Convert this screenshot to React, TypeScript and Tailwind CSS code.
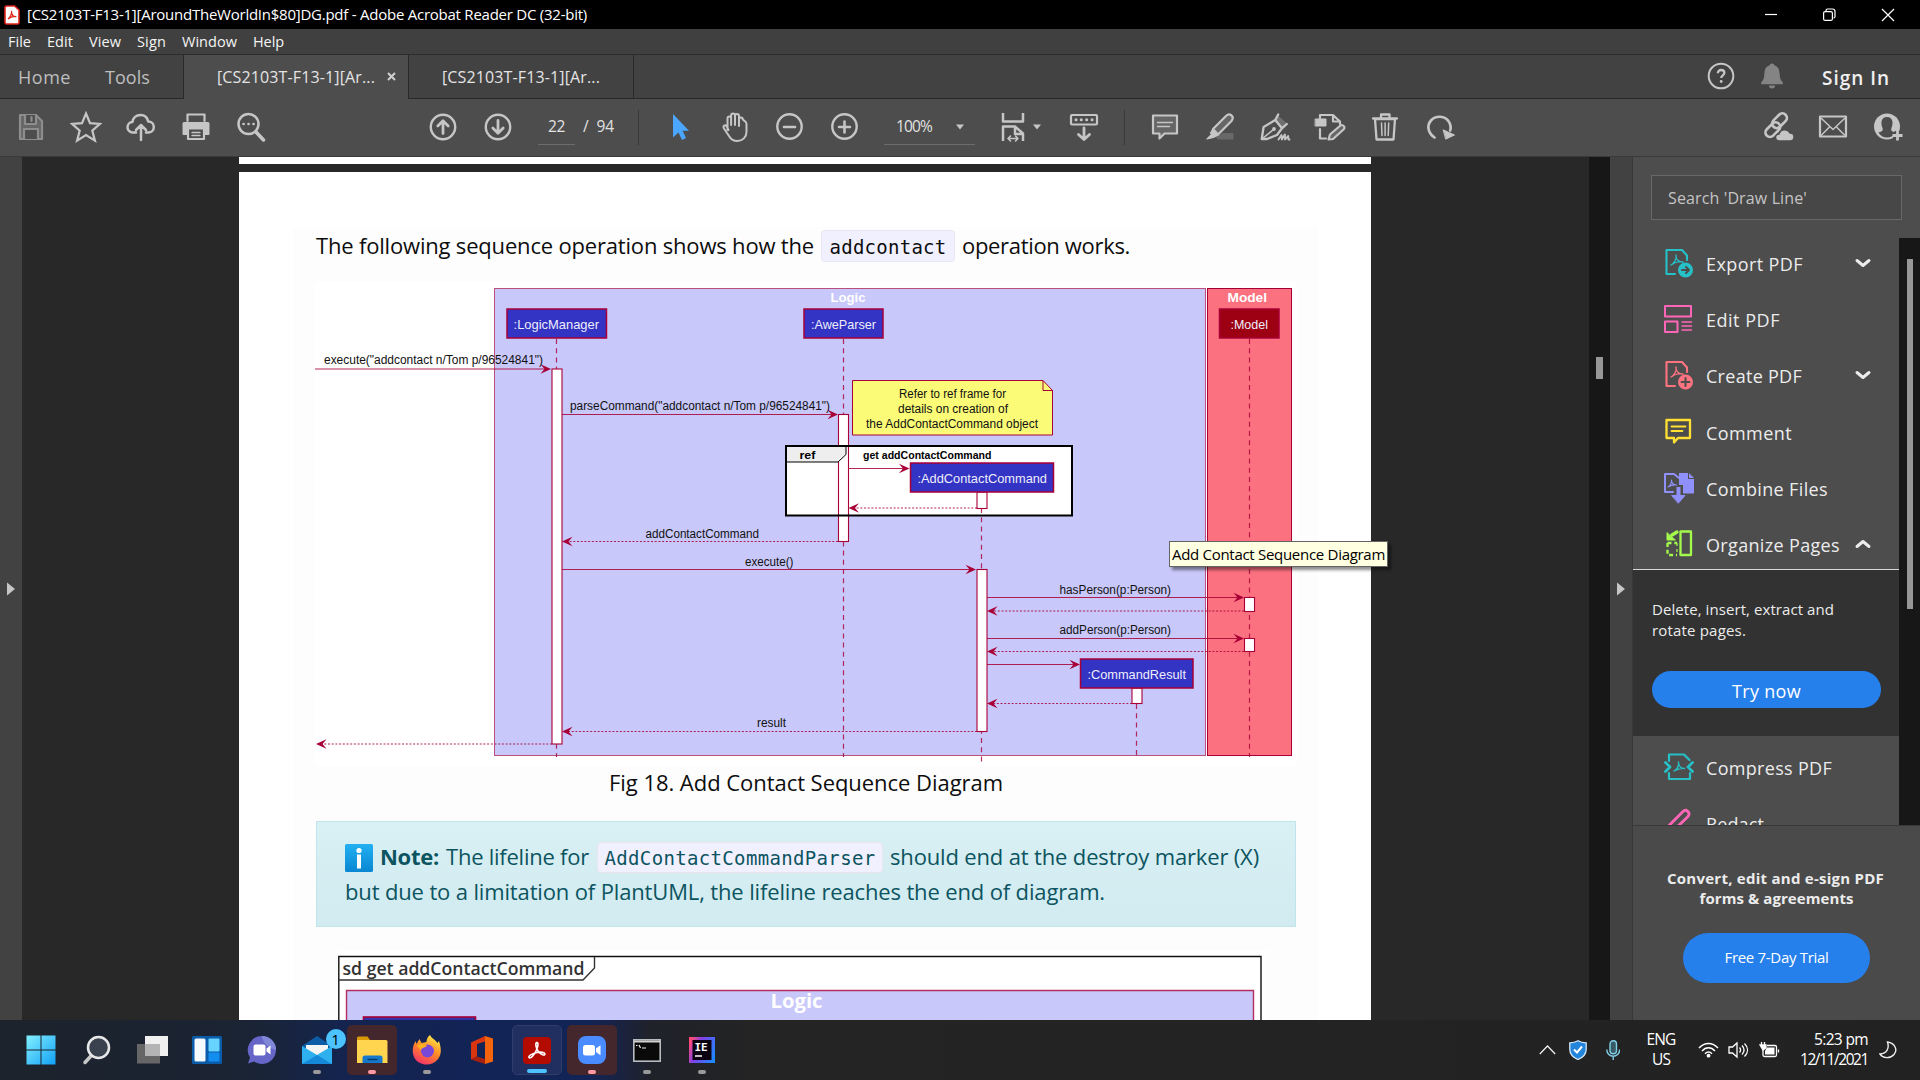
import React, { useLayoutEffect, useRef, useState } from "react";

/* Text set to a fixed measure by spreading the difference over its letters. */
function Fit({ w, className = "", children }: { w: number; className?: string; children: string }) {
  const ref = useRef<HTMLSpanElement>(null);
  const [ls, setLs] = useState(0);
  useLayoutEffect(() => {
    const el = ref.current;
    if (el) setLs((w - el.getBoundingClientRect().width) / children.length);
  }, []);
  return (
    <span ref={ref} className={`inline-block shrink-0 whitespace-pre ${className}`} style={{ letterSpacing: ls }}>
      {children}
    </span>
  );
}

const G = "#c6c6c6";

function Icon({ s = 32, children, color = G, sw = 2.2 }: { s?: number; children: React.ReactNode; color?: string; sw?: number }) {
  return (
    <svg width={s} height={s} viewBox={`0 0 ${s} ${s}`} fill="none" stroke={color} strokeWidth={sw} strokeLinejoin="round" strokeLinecap="round" className="shrink-0">
      {children}
    </svg>
  );
}

function Cell({ children }: { children: React.ReactNode }) {
  return <div className="flex w-[55px] shrink-0 items-center justify-center">{children}</div>;
}

function Caret() {
  return (
    <svg width="8" height="6" viewBox="0 0 8 6" className="shrink-0">
      <path d="M0 .5h8L4 5.5z" fill={G} />
    </svg>
  );
}

function TitleBar() {
  return (
    <div className="flex h-[29px] shrink-0 items-center bg-black text-white">
      <svg width="16" height="20" viewBox="0 0 16 20" className="ml-1">
        <path d="M2.500 1h8L15 5v12.500a1.500 1.500 0 0 1-1.500 1.500h-11A1.500 1.500 0 0 1 1 17.500V2.500A1.500 1.500 0 0 1 2.500 1z" fill="#fff" stroke="#e0251b" strokeWidth="1.600" />
        <path d="M4 14c2-1 4-5 3.600-8-.8 4 2.400 6 4.600 5.600-3-.8-6 .6-8.200 2.400z" fill="none" stroke="#e0251b" strokeWidth="1.300" />
      </svg>
      <Fit w={560} className="ml-[7px] text-[15px] leading-none">[CS2103T-F13-1][AroundTheWorldIn$80]DG.pdf - Adobe Acrobat Reader DC (32-bit)</Fit>
      <svg width="150" height="28" viewBox="0 0 150 28" className="ml-auto mr-[22px]" fill="none" stroke="#fff" strokeWidth="1.200">
        <path d="M17 13.500h12" />
        <rect x="75.600" y="10.600" width="8.800" height="8.800" rx="1.500" />
        <path d="M78 10V9.500a1.500 1.500 0 0 1 1.500-1.500h5a2.500 2.500 0 0 1 2.500 2.500v5a1.500 1.500 0 0 1-1.500 1.500" />
        <path d="M134 8l12 12M146 8l-12 12" />
      </svg>
    </div>
  );
}

function MenuBar() {
  const items: [string, number, string][] = [
    ["File", 23, "ml-[8px]"],
    ["Edit", 26, "ml-[16px]"],
    ["View", 32, "ml-[16px]"],
    ["Sign", 29, "ml-[16px]"],
    ["Window", 55, "ml-[16px]"],
    ["Help", 31, "ml-[16px]"],
  ];
  return (
    <div className="flex h-[26px] shrink-0 items-center border-b border-[#2b2b2b] bg-[#404040] pt-px text-[14.5px] leading-none text-[#f4f4f4]">
      {items.map(([t, w, m]) => (
        <span key={t} className={m}>
          <Fit w={w}>{t}</Fit>
        </span>
      ))}
    </div>
  );
}

function TabBar() {
  return (
    <div className="flex h-[44px] shrink-0 bg-[#424242] leading-none">
      <div className="flex w-[184px] items-center border-b border-r border-[#292929] text-[18px] text-[#bebebe]">
        <Fit w={53} className="ml-[18px]">Home</Fit>
        <Fit w={45} className="ml-[34px]">Tools</Fit>
      </div>
      <div className="flex w-[224px] items-center bg-[#4d4d4d] text-[16px] text-[#e4e4e4]">
        <Fit w={158} className="ml-[33px]">[CS2103T-F13-1][Ar...</Fit>
        <svg width="9" height="9" viewBox="0 0 9 9" className="-mt-[2px] ml-[12px]" stroke="#d0d0d0" strokeWidth="2">
          <path d="M1 1l7 7M8 1L1 8" />
        </svg>
      </div>
      <div className="flex w-[226px] items-center border-x border-b border-[#292929] text-[16px] text-[#e4e4e4]">
        <Fit w={158} className="ml-[33px] mt-px">[CS2103T-F13-1][Ar...</Fit>
      </div>
      <div className="flex flex-1 items-center justify-end border-b border-[#292929]">
        <svg width="28" height="28" viewBox="0 0 28 28" className="-mt-px" fill="none" stroke={G} strokeWidth="2">
          <circle cx="14" cy="14" r="12.300" />
          <path d="M10.800 11.200c0-4.400 6.600-4 6.600-.4 0 2.600-3.200 2.600-3.200 5.200" strokeWidth="2.300" />
          <circle cx="14.200" cy="19.500" r="1.400" fill={G} stroke="none" />
        </svg>
        <svg width="24" height="28" viewBox="0 0 24 28" className="-mt-px ml-[25px]" fill="#848484">
          <path d="M12 1.500c1.400 0 2 .8 2.200 1.800 4 1 5.200 4.400 5.400 8.700.2 4 1 6.600 3.200 8.200v2H1.200v-2c2.200-1.600 3-4.200 3.200-8.200.2-4.300 1.400-7.700 5.400-8.700.2-1 .8-1.800 2.200-1.800zM9 23.500h6a3 3 0 0 1-6 0z" />
        </svg>
        <Fit w={68} className="ml-[38px] mr-[30px] mt-[3px] text-[19px] font-semibold text-[#f0f0f0]">Sign In</Fit>
      </div>
    </div>
  );
}

function Toolbar() {
  return (
    <div className="flex h-[58px] shrink-0 items-center border-b border-[#3a3a3a] bg-[#4d4d4d] pb-px">
      <div className="ml-[3px] flex">
        <Cell>
          <Icon color="#8d8d8d">
            <path d="M5 4h16l6 6v18H5z" fill="#666" />
            <path d="M10 4v9h11V4M16.500 6v4M9 28V18h14v10" fill="#4d4d4d" />
          </Icon>
        </Cell>
        <Cell>
          <Icon>
            <path d="M16 2.500l4 9.700 10 .7-7.700 6.700 2.600 10L16 24l-8.900 5.600 2.600-10L2 12.900l10-.7z" strokeLinejoin="miter" />
          </Icon>
        </Cell>
        <Cell>
          <Icon sw={2.5}>
            <path d="M11 21.500H8a5.200 5.200 0 0 1-.6-10.400C8 6.800 11.300 4 15.500 4c4 0 7 2.600 7.700 6.600 3.400 0 5.600 2.300 5.600 5.300 0 3.200-2.300 5.600-5.600 5.600H21M16 29V14.500M11 19l5-5 5 5" />
          </Icon>
        </Cell>
        <Cell>
          <Icon>
            <path d="M7.500 10V3.500h17V10" />
            <path d="M4 11h24a1.500 1.500 0 0 1 1.500 1.500V23a1 1 0 0 1-1 1H3.500a1 1 0 0 1-1-1V12.500A1.500 1.500 0 0 1 4 11z" fill={G} stroke="none" />
            <path d="M8 17.500h16V28H8z" fill="#4d4d4d" />
            <path d="M12 21.500h8M12 24.500h8" strokeWidth="1.300" />
          </Icon>
        </Cell>
        <Cell>
          <Icon sw={2.5}>
            <circle cx="13.500" cy="13" r="10" />
            <path d="M21 21l7.500 8" strokeWidth="3.500" />
            <path d="M8.500 13h.1M13.500 13h.1M18.500 13h.1" strokeWidth="2.600" />
          </Icon>
        </Cell>
      </div>
      <div className="ml-[137px] flex">
        <Cell>
          <Icon sw={2.4}>
            <circle cx="16" cy="16" r="12.200" />
            <path d="M16 22.500V10M10.800 15L16 9.800l5.200 5.200" strokeWidth="2.800" />
          </Icon>
        </Cell>
        <Cell>
          <Icon sw={2.4}>
            <circle cx="16" cy="16" r="12.200" />
            <path d="M16 9.500V22M10.800 17L16 22.200l5.200-5.200" strokeWidth="2.800" />
          </Icon>
        </Cell>
      </div>
      <div className="ml-[13px] flex h-[35px] w-[37px] items-center justify-center border-b border-[#6c6c6c] text-[15.500px] leading-none text-[#e2e2e2]">
        <Fit w={17}>22</Fit>
      </div>
      <Fit w={31} className="ml-[8px] text-[15.500px] leading-none text-[#e2e2e2]">/  94</Fit>
      <div className="ml-[24px] h-[35px] w-px bg-[#383838]" />
      <div className="ml-[13px] flex">
        <Cell>
          <svg width="20" height="30" viewBox="0 0 20 30">
            <path d="M3 2v23.500l5.500-5 3.500 7.500 4-2-3.400-7.200H19z" fill="#4ba6ff" />
          </svg>
        </Cell>
        <Cell>
          <Icon sw={2}>
            <path d="M8.500 19V7.500c0-2.600 3.600-2.600 3.600 0V14M12.100 14V4.500c0-2.800 3.900-2.800 3.900 0V14M16 14V5c0-2.800 4-2.800 4 0v10M20 15V8.500c0-2.600 3.800-2.600 3.800 0l3 2.500c.8 1 .7 2 .7 3v7c0 5-4 9-9 9-4 0-6.500-1.500-8.500-5l-5-7.500c-1.500-3 1-4 2.500-2.500l2 4" />
          </Icon>
        </Cell>
        <Cell>
          <Icon sw={2.4}>
            <circle cx="15.500" cy="15.500" r="12.200" />
            <path d="M10 16h11" strokeWidth="2.600" />
          </Icon>
        </Cell>
        <Cell>
          <Icon sw={2.4}>
            <circle cx="15.500" cy="15.500" r="12.200" />
            <path d="M10 16h11M15.500 10.500v11" strokeWidth="2.600" />
          </Icon>
        </Cell>
      </div>
      <div className="ml-[12px] flex h-[35px] w-[91px] items-center border-b border-[#6c6c6c] text-[15.500px] leading-none text-[#e2e2e2]">
        <Fit w={36} className="ml-[12px] mt-px">100%</Fit>
        <span className="ml-[24px]">
          <Caret />
        </span>
      </div>
      <div className="ml-[22px] flex items-center">
        <Icon sw={2.5}>
          <path d="M6 2v8.500h20V2M6 30V15.500h12l8 7V30M18 16v7h8" strokeLinecap="butt" />
          <path d="M11 27.500h10M13.500 25L11 27.500l2.500 2.500M18.500 25l2.500 2.500-2.500 2.500" strokeWidth="1.600" />
        </Icon>
        <span className="ml-[4px]">
          <Caret />
        </span>
      </div>
      <div className="ml-[27px] flex items-center">
        <Icon>
          <rect x="3" y="4" width="26" height="9.500" rx="1" />
          <path d="M8 8.800h.1M13.200 8.800h.1M18.600 8.800h.1M24 8.800h.1" strokeWidth="3" />
          <path d="M16 17v11M10.500 23.500l5.500 5 5.500-5" strokeWidth="2.800" />
        </Icon>
      </div>
      <div className="ml-[24px] h-[35px] w-px bg-[#383838]" />
      <div className="ml-[12px] flex">
        <Cell>
          <Icon>
            <path d="M4 4.500h24v18H15.500l-5 5v-5H4z" fill="#666" />
            <path d="M8.500 11.500h15M8.500 15.500h12" strokeWidth="1.400" />
          </Icon>
        </Cell>
        <Cell>
          <Icon>
            <path d="M14 28.500l-3-3L19 22h10.500v6.500z" fill="#686868" stroke="none" />
            <path d="M9 18L22.500 4.500c3-3 8.500 1 5 5.500L14 23.500z" fill="#666" />
            <path d="M8.500 18.500l5.500 5.500-3.500 2-4-4zM3 28l4-4 2.500 2.500z" fill={G} strokeWidth="1.200" />
          </Icon>
        </Cell>
        <Cell>
          <Icon>
            <path d="M18.500 4l-2 5.500 6.500 7.500 5.500-4z" fill="#707070" stroke="none" />
            <path d="M2.700 28l1.900-12L16.300 9l6.700 8.300-5 6.700-10 4zM19.200 3.500L16.300 9M23 17.300l4.800-4.300" strokeWidth="2.300" />
            <path d="M3.500 27.500l11-9" strokeWidth="1.600" />
            <path d="M19.500 28.500l3-4.500.4 4.500 3-5 .2 5 3-3.500.4 3.500h1" strokeWidth="1.900" />
            <circle cx="15" cy="18" r="1.900" fill={G} stroke="none" />
          </Icon>
        </Cell>
        <Cell>
          <Icon>
            <path d="M6 8V4h13l7 6.500V13M19 4v6.500h7" />
            <rect x="1.500" y="8" width="10.500" height="7" fill={G} strokeWidth="1" />
            <path d="M6 18v9.500h6" />
            <path d="M14.500 28.500l1.500-5L27 14c3 0 4 2 3 4L19 28z" fill="#666" />
          </Icon>
        </Cell>
        <Cell>
          <Icon sw={2.3}>
            <path d="M6 8h20l-1.500 20.500h-17zM4 7.500h24M12 7V3.500h8.500V7" />
            <path d="M12.500 12l.5 12.500M16.100 12v12.500M19.700 12l-.5 12.500" strokeWidth="1.500" />
          </Icon>
        </Cell>
        <Cell>
          <Icon sw={2.7}>
            <path d="M10.500 26.500C4 22 2.500 14.500 7 9.500c4.500-5 12.500-5 17 0 2.500 3 3.200 6.500 2.200 10" />
            <path d="M19.500 19l11 5-8.500 4z" fill={G} strokeWidth="1" />
          </Icon>
        </Cell>
      </div>
      <div className="ml-auto mr-[5px] flex">
        <Cell>
          <Icon sw={2.7}>
            <g transform="translate(14 14) rotate(-45)">
              <rect x="-3" y="-5" width="17" height="9" rx="4.500" />
              <rect x="-14" y="-3.500" width="17" height="9" rx="4.500" />
            </g>
            <path d="M17 30a3.500 3.500 0 0 1 0-7 6 6 0 0 1 11-1 4 4 0 0 1 0 8z" fill={G} stroke="#4d4d4d" strokeWidth="1.500" />
          </Icon>
        </Cell>
        <Cell>
          <Icon>
            <rect x="3" y="5.500" width="26" height="20" />
            <path d="M4.500 7.500L16 18.500 27.500 7.500M4.500 24l8.500-8.500M27.500 24L19 15.500" strokeWidth="1.500" />
          </Icon>
        </Cell>
        <Cell>
          <Icon>
            <circle cx="15" cy="15.500" r="13" fill={G} stroke="none" />
            <path d="M15 6c6 0 6.500 6 4.500 11-.8 2.500 0 3.500 4 4.500-1.500 3-5 5-8.500 5s-7-2-8.500-5c4-1 4.800-2 4-4.500C8.500 12 9 6 15 6z" fill="#4d4d4d" stroke="none" />
            <path d="M21 24.500h9M25.500 20v9" stroke="#4d4d4d" strokeWidth="6" strokeLinecap="butt" />
            <path d="M20.500 24.500h10M25.500 19.500v10" strokeWidth="2.800" strokeLinecap="butt" />
          </Icon>
        </Cell>
      </div>
    </div>
  );
}

/* ---------- Sequence diagram ---------- */

const M = "#a80036";

function Arrow({ from, to, y, dashed }: { from: number; to: number; y: number; dashed?: boolean }) {
  const d = to > from ? -1 : 1;
  return (
    <g>
      <path d={`M${from} ${y}H${to + d * 4}`} stroke={M} strokeWidth="1.1" strokeDasharray={dashed ? "2 1.7" : undefined} opacity="0.85" />
      <path d={`M${to} ${y}l${d * 10.5} -4.700l${d * -4} 4.700l${d * 4} 4.700z`} fill={M} />
    </g>
  );
}

function Life({ x, y1, y2 }: { x: number; y1: number; y2: number }) {
  return <path d={`M${x} ${y1}V${y2}`} stroke={M} strokeWidth="1.200" strokeDasharray="5 4.200" opacity="0.8" />;
}

function Bar({ x, y1, y2 }: { x: number; y1: number; y2: number }) {
  return <rect x={x} y={y1} width="10" height={y2 - y1} fill="#fff" stroke={M} strokeWidth="1.100" />;
}

function T({ x1, x2, y, size = 12.5, fill = "#111", bold, children }: { x1: number; x2: number; y: number; size?: number; fill?: string; bold?: boolean; children: string }) {
  return (
    <text x={x1} y={y} textLength={x2 - x1} lengthAdjust="spacingAndGlyphs" fontSize={size} fill={fill} fontWeight={bold ? 700 : 400} fontFamily="'Liberation Sans', sans-serif">
      {children}
    </text>
  );
}

function Box({ x1, x2, y, fill = "#3333c4", t1, t2, children }: { x1: number; x2: number; y: number; fill?: string; t1: number; t2: number; children: string }) {
  return (
    <g>
      <rect x={x1} y={y} width={x2 - x1} height="29" fill={fill} stroke={M} strokeWidth="1.500" />
      <T x1={t1} x2={t2} y={y + 20} size={13.5} fill="#eeeefa">{children}</T>
    </g>
  );
}

function SequenceDiagram() {
  return (
    <svg width="982" height="484" viewBox="315 282 982 484" fill="none" className="block bg-white">
      <rect x="494.500" y="288.500" width="711" height="467" fill="#c8c8fa" stroke={M} strokeOpacity="0.65" />
      <rect x="1207.500" y="288.500" width="84" height="467" fill="#fb7180" stroke={M} />
      <T x1={830.5} x2={865.5} y={302} size={13.5} bold fill="#fff">Logic</T>
      <T x1={1227.5} x2={1267} y={302} size={13.5} bold fill="#fff">Model</T>
      <Life x={556.5} y1={339} y2={757} />
      <Life x={843.5} y1={339} y2={757} />
      <Life x={1249.5} y1={339} y2={757} />
      <Life x={1136.5} y1={704} y2={757} />
      <rect x="786" y="446.500" width="286" height="69.500" fill="#fff" />
      <Life x={981.5} y1={508} y2={762} />
      <Bar x={552} y1={369} y2={744} />
      <Bar x={838.5} y1={414.5} y2={541.5} />
      <path d="M786 446.500h60v8l-8 7.500h-52z" fill="#eee" stroke="#000" strokeWidth="1" />
      <rect x="786" y="446" width="286" height="69.500" stroke="#000" strokeWidth="2" />
      <Bar x={977} y1={492} y2={508.5} />
      <Bar x={977} y1={569.5} y2={731.5} />
      <Bar x={1132} y1={688} y2={703.5} />
      <Bar x={1244.5} y1={597.5} y2={611.5} />
      <Bar x={1244.5} y1={638.5} y2={651.5} />
      <Box x1={507} x2={606.5} y={309} t1={513.6} t2={599}>:LogicManager</Box>
      <Box x1={804} x2={883} y={309} t1={811} t2={876}>:AweParser</Box>
      <Box x1={1219.5} x2={1279} y={309} t1={1230.5} t2={1268} fill="#9d0012">:Model</Box>
      <Box x1={910.5} x2={1053.5} y={463} t1={917.5} t2={1047}>:AddContactCommand</Box>
      <Box x1={1080.5} x2={1193} y={659} t1={1087.5} t2={1186}>:CommandResult</Box>
      <Arrow from={315} to={551} y={369} />
      <Arrow from={562} to={838} y={414.5} />
      <Arrow from={848.5} to={909.5} y={468.5} />
      <Arrow from={977} to={848.5} y={508} dashed />
      <Arrow from={838} to={562} y={541.5} dashed />
      <Arrow from={562} to={976} y={569.5} />
      <Arrow from={987} to={1244} y={597.5} />
      <Arrow from={1244} to={987} y={611} dashed />
      <Arrow from={987} to={1244} y={638.5} />
      <Arrow from={1244} to={987} y={651.5} dashed />
      <Arrow from={987} to={1080} y={664.5} />
      <Arrow from={1132} to={987} y={703.5} dashed />
      <Arrow from={977} to={562} y={731.5} dashed />
      <Arrow from={552} to={316} y={744} dashed />
      <path d="M852.500 380.500h190.500l9.500 10v44.500h-200z" fill="#fbfb77" stroke={M} />
      <path d="M1043 380.500v10h10" stroke={M} />
      <T x1={324} x2={543} y={364}>execute("addcontact n/Tom p/96524841")</T>
      <T x1={570} x2={830} y={410}>parseCommand("addcontact n/Tom p/96524841")</T>
      <T x1={899} x2={1006} y={397.5}>Refer to ref frame for</T>
      <T x1={898} x2={1008} y={413}>details on creation of</T>
      <T x1={866} x2={1038} y={428}>the AddContactCommand object</T>
      <T x1={799.5} x2={815.5} y={459} size={11.5} bold fill="#000">ref</T>
      <T x1={863} x2={991.5} y={458.5} size={11} bold fill="#000">get addContactCommand</T>
      <T x1={645.5} x2={759} y={537.5}>addContactCommand</T>
      <T x1={745} x2={793.5} y={565.5}>execute()</T>
      <T x1={1059.5} x2={1171} y={593.5}>hasPerson(p:Person)</T>
      <T x1={1059.5} x2={1171} y={634}>addPerson(p:Person)</T>
      <T x1={757} x2={786} y={727}>result</T>
    </svg>
  );
}

function SubDiagram() {
  return (
    <svg width="930" height="70" viewBox="338 950 930 70" fill="none" className="block bg-white">
      <path d="M338.800 1020V956.500H1261V1020" stroke="#111" strokeWidth="1.400" />
      <path d="M338.500 980H583l11.500-12V957" stroke="#333" strokeWidth="1.400" />
      <text x="342.500" y="974.500" textLength="242" lengthAdjust="spacingAndGlyphs" fontSize="18" fontWeight="600" fill="#333" fontFamily="'Open Sans', sans-serif">sd get addContactCommand</text>
      <path d="M346.500 1022V990.500H1253.500V1022" fill="#c8c8fa" stroke={M} strokeWidth="1.400" strokeOpacity="0.8" />
      <text x="770.500" y="1008" textLength="52" lengthAdjust="spacingAndGlyphs" fontSize="19" fontWeight="700" fill="#fff" fontFamily="'Open Sans', sans-serif">Logic</text>
      <rect x="363.500" y="1017" width="112" height="10" fill="#3333a8" stroke={M} strokeWidth="1.600" />
    </svg>
  );
}

function DocumentView() {
  return (
    <div className="relative flex w-[1589px] shrink-0">
      <div className="flex w-[22px] shrink-0 items-center bg-[#424242]">
        <svg width="8" height="14" viewBox="0 0 8 14" className="ml-[7px]">
          <path d="M0 .5l8 6.500-8 6.500z" fill={G} />
        </svg>
      </div>
      <div className="flex flex-1 flex-col overflow-hidden bg-[#282828] pl-[217px]">
        <div className="h-[7px] w-[1132px] shrink-0 bg-white" />
        <div className="mt-[8px] w-[1132px] flex-1 overflow-hidden bg-white pl-[54px] pt-[55px] text-[22px] leading-none text-[#0d0d0d]">
          <div className="h-[900px] w-[1025px] bg-[#fdfdfd]">
            <div className="ml-[23px] flex h-[36px] items-center">
              <Fit w={498} className="-mt-px">The following sequence operation shows how the</Fit>
              <span className="ml-[7px] mt-px flex h-[32px] w-[134px] shrink-0 items-center justify-center rounded-[4px] border border-[#e6e6f0] bg-[#f1f0ff] pt-[3px] font-['DejaVu_Sans_Mono'] text-[19px]">
                <Fit w={117}>addcontact</Fit>
              </span>
              <Fit w={168} className="-mt-px ml-[7px]">operation works.</Fit>
            </div>
            <div className="ml-[22px] mt-[19px]">
              <SequenceDiagram />
            </div>
            <div className="ml-[316px] mt-[2px] flex h-[28px] items-center">
              <Fit w={394}>Fig 18. Add Contact Sequence Diagram</Fit>
            </div>
            <div className="ml-[23px] mt-[25px] h-[106px] w-[980px] border border-[#bee5eb] bg-gradient-to-b from-[#d9f0f4] to-[#d1ebf0] pt-[16px] text-[#0c5460]">
              <div className="flex h-[36px] items-center">
                <svg width="28" height="28" viewBox="0 0 28 28" className="ml-[28px] mt-[4px]">
                  <defs>
                    <linearGradient id="info" x1="0" y1="0" x2="0" y2="1">
                      <stop offset="0" stopColor="#22b0f2" />
                      <stop offset="1" stopColor="#0a86d2" />
                    </linearGradient>
                  </defs>
                  <rect width="28" height="28" rx="1.500" fill="url(#info)" />
                  <circle cx="14" cy="6.500" r="2.600" fill="#fff" />
                  <rect x="12" y="10.500" width="4" height="14" fill="#fff" />
                </svg>
                <Fit w={59} className="ml-[7px] font-bold">Note:</Fit>
                <Fit w={143} className="ml-[7px]">The lifeline for</Fit>
                <span className="ml-[8px] mt-[2px] flex h-[31px] w-[286px] shrink-0 items-center justify-center rounded-[4px] border border-[#e9e4ee] bg-[#f1f0ff] pt-[3px] font-['DejaVu_Sans_Mono'] text-[19px]">
                  <Fit w={271}>AddContactCommandParser</Fit>
                </span>
                <Fit w={369} className="ml-[7px]">should end at the destroy marker (X)</Fit>
              </div>
              <div className="flex h-[33px] items-center">
                <Fit w={760} className="ml-[28px]">but due to a limitation of PlantUML, the lifeline reaches the end of diagram.</Fit>
              </div>
            </div>
            <div className="ml-[45px] mt-[23px]">
              <SubDiagram />
            </div>
          </div>
        </div>
      </div>
      <div className="absolute left-[1169px] top-[384px] flex h-[26px] w-[219px] items-center justify-center border border-[#646464] bg-[#ffffe1] text-[15px] leading-none text-black shadow-[3px_3px_3px_rgba(0,0,0,0.45)]">
        <Fit w={213}>Add Contact Sequence Diagram</Fit>
      </div>
    </div>
  );
}

/* ---------- Tools panel ---------- */

const acro = "M8 18c3-1.500 6-6 5-10-.5 4 3 7.500 7 7-4-1-8 0-12 3z";

const tools: { name: string; w: number; open?: "down" | "up"; icon: React.ReactNode }[] = [
  {
    name: "Export PDF", w: 97, open: "down",
    icon: (
      <Icon color="#26c0c7" sw={2.1}>
        <path d="M12 27H3.500V3H19l5 5.500V13" />
        <path d={acro} strokeWidth="1.300" />
        <circle cx="22.500" cy="23" r="7.500" fill="#26c0c7" stroke="none" />
        <path d="M19 23h6M23 20l3 3-3 3" stroke="#4d4d4d" />
      </Icon>
    ),
  },
  {
    name: "Edit PDF", w: 74,
    icon: (
      <Icon color="#ff66b8" sw={2}>
        <rect x="2" y="3" width="26" height="10.500" />
        <rect x="2" y="18.500" width="12.500" height="10.500" />
        <path d="M19 19h9.500M19 23h9.500M19 27h9.500" strokeWidth="1.400" />
      </Icon>
    ),
  },
  {
    name: "Create PDF", w: 96, open: "down",
    icon: (
      <Icon color="#ff7380" sw={2.1}>
        <path d="M12 27H3.500V3H19l5 5.500V13" />
        <path d={acro} strokeWidth="1.300" />
        <circle cx="22.500" cy="23" r="7.500" fill="#ff7380" stroke="none" />
        <path d="M18.500 23h8M22.500 19v8" stroke="#4d4d4d" />
      </Icon>
    ),
  },
  {
    name: "Comment", w: 86,
    icon: (
      <Icon color="#ffe033" sw={2.3}>
        <path d="M3.500 4h23.500v18H15L11 26.500V22H3.500z" />
        <path d="M8.500 10.500h14M8.500 15h11" strokeWidth="1.800" />
      </Icon>
    ),
  },
  {
    name: "Combine Files", w: 122,
    icon: (
      <Icon color="#9090fa" sw={2}>
        <path d="M10 20H2V2h9l5 4" />
        <path d="M5 15c2-1 4-4 3.500-7 0 3 2 5 5 5-3-.5-6 .5-8.500 2z" strokeWidth="1.200" />
        <path d="M16 1h9v6h6v14.500H20V13h-4z" fill="#9090fa" stroke="none" />
        <path d="M26 1l5 5h-5z" fill="#9090fa" stroke="none" />
        <path d="M15.500 15v8" strokeWidth="4" strokeLinecap="butt" />
        <path d="M9 23.500h13L15.500 31z" fill="#9090fa" strokeWidth="1" />
      </Icon>
    ),
  },
  {
    name: "Organize Pages", w: 134, open: "up",
    icon: (
      <Icon color="#a4fa4c" sw={2.3}>
        <rect x="17.500" y="3.500" width="10.500" height="23.500" />
        <path d="M4.500 15h9.500M4.500 15v12H14" strokeDasharray="4 2.800" strokeLinecap="butt" />
        <path d="M14 15v12" strokeDasharray="3 3" strokeLinecap="butt" strokeWidth="1.200" />
        <path d="M14 4L9 7" strokeWidth="3.400" />
        <path d="M4 5v7h8z" fill="#a4fa4c" strokeWidth="1" />
      </Icon>
    ),
  },
];

function ToolRow({ name, w, open, icon }: { name: string; w: number; open?: "down" | "up"; icon: React.ReactNode }) {
  return (
    <div className="flex h-[56.2px] shrink-0 items-center">
      <span className="ml-[30px]">{icon}</span>
      <Fit w={w} className="ml-[11px] mt-[2px] text-[18px] leading-none text-[#ececec]">{name}</Fit>
      {open && (
        <svg width="18" height="12" viewBox="0 0 18 12" className="ml-auto mr-[27px]" fill="none" stroke="#ececec" strokeWidth="3" strokeLinecap="round" strokeLinejoin="round">
          <path d={open === "down" ? "M3 3.500l6 5 6-5" : "M3 8.500l6-5 6 5"} />
        </svg>
      )}
    </div>
  );
}

function ToolsPanel() {
  return (
    <div className="flex w-[287px] shrink-0 flex-col bg-[#4d4d4d]">
      <div className="ml-[18px] mt-[18px] flex h-[45px] w-[251px] shrink-0 items-center border border-[#686868] bg-[#474747]">
        <Fit w={139} className="ml-[16px] text-[16px] leading-none text-[#c4c4c4]">Search 'Draw Line'</Fit>
      </div>
      <div className="mt-[18px] flex h-[587px] shrink-0">
        <div className="flex w-[266px] flex-col overflow-hidden">
          <div className="-mt-[3px] box-content flex h-[334px] shrink-0 flex-col border-b border-[#d8d8d8]">
            {tools.map((t) => (
              <ToolRow key={t.name} {...t} />
            ))}
          </div>
          <div className="flex h-[166px] shrink-0 flex-col bg-[#323232] pl-[19px] pt-[29px] text-[15px] leading-none text-[#ececec]">
            <div className="flex h-[21px] items-center"><Fit w={182}>Delete, insert, extract and</Fit></div>
            <div className="flex h-[21px] items-center"><Fit w={94}>rotate pages.</Fit></div>
            <div className="mt-[30px] flex h-[37px] w-[229px] items-center justify-center rounded-full bg-[#2680eb] pt-[3px] text-[18px] text-white">
              <Fit w={69}>Try now</Fit>
            </div>
          </div>
          <div className="mt-[3px] flex flex-col">
            <ToolRow
              name="Compress PDF"
              w={126}
              icon={
                <Icon color="#26c0c7" sw={2.2}>
                  <path d="M6 10V3.500h15L26.500 9M6 22v6h21v-6" />
                  <path d="M2.500 11.500l4.500 4.500-4.500 4.500M29.500 11.500L25 16l4.500 4.500" strokeWidth="2.800" />
                  <path d="M11 20c3-1 5-5 4.500-9 0 4 2.500 6.500 6 6.500-4-.5-7 .5-10.500 2.500z" strokeWidth="1.400" />
                </Icon>
              }
            />
            <ToolRow
              name="Redact"
              w={58}
              icon={
                <Icon color="#ff66b8" sw={2.8}>
                  <path d="M6 18.500L20 4.500c3-3 8 1 5 5L10 24z" />
                </Icon>
              }
            />
          </div>
        </div>
        <div className="flex w-[21px] justify-center bg-[#171717] pt-[21px]">
          <div className="h-[350px] w-[6px] bg-[#979797]" />
        </div>
      </div>
      <div className="flex flex-1 flex-col items-center border-t border-[#383838] bg-[#4a4a4a] pt-[42px] text-[15px] font-bold leading-none text-[#ececec]">
        <div className="-ml-[2px] flex h-[20px] items-center"><Fit w={217}>Convert, edit and e-sign PDF</Fit></div>
        <div className="flex h-[20px] items-center"><Fit w={154}>forms &amp; agreements</Fit></div>
        <div className="mt-[25px] flex h-[50px] w-[187px] items-center justify-center rounded-full bg-[#2680eb] pb-px text-[15px] font-normal text-white">
          <Fit w={104}>Free 7-Day Trial</Fit>
        </div>
      </div>
    </div>
  );
}

/* ---------- Taskbar ---------- */

function TaskIcon({ children, dot, hi }: { children: React.ReactNode; dot?: "gray" | "pink" | "blue"; hi?: "red" | "blue" }) {
  const bg = hi === "red" ? "bg-[#43272c]" : hi === "blue" ? "bg-[#212f60] border border-[#2f3d6b]" : "";
  const dc = dot === "blue" ? "w-[20px] bg-[#4cc2ff]" : dot === "pink" ? "w-[8px] bg-[#ff99a4]" : "w-[8px] bg-[#9a9a9a]";
  return (
    <div className="flex w-[55px] shrink-0 justify-center">
      <div className={`relative flex h-[50px] w-[50px] items-center justify-center rounded-[5px] ${bg}`}>
        {children}
        {dot && <div className={`absolute bottom-[1px] h-[4px] rounded-full ${dc}`} />}
      </div>
    </div>
  );
}

function Taskbar() {
  return (
    <div className="flex h-[60px] shrink-0 items-center bg-[linear-gradient(90deg,#1c232c_0px,#1b2434_250px,#14244e_340px,#122356_480px,#122356_590px,#20222a_650px,#242424_760px,#222222_1920px)] text-white">
      <div className="ml-[14px] flex">
        <TaskIcon>
          <svg width="30" height="30" viewBox="0 0 30 30" className="-ml-px">
            <defs>
              <linearGradient id="win" x1="0" y1="0" x2="1" y2="1">
                <stop offset="0" stopColor="#83f0ff" />
                <stop offset="1" stopColor="#12a0f5" />
              </linearGradient>
            </defs>
            <path d="M.5.5h14v14H.5zM15.500.5h14v14h-14zM.5 15.500h14v14H.5zM15.500 15.500h14v14h-14z" fill="url(#win)" />
          </svg>
        </TaskIcon>
        <TaskIcon>
          <svg width="30" height="30" viewBox="0 0 30 30" fill="none" stroke="#e8e8e8">
            <path d="M9 21L3 27.500" strokeWidth="3.500" strokeLinecap="round" stroke="#c8c8c8" />
            <circle cx="16.500" cy="12.500" r="10.500" fill="#3a4250" strokeWidth="2.500" />
          </svg>
        </TaskIcon>
        <TaskIcon>
          <svg width="32" height="30" viewBox="0 0 32 30">
            <rect x="1" y="9" width="23" height="19.500" fill="#666" />
            <rect x="9" y="1" width="23" height="20" fill="#f0f0f0" />
            <path d="M9 9h15v12H9z" fill="#b4b4b4" />
          </svg>
        </TaskIcon>
        <TaskIcon>
          <svg width="30" height="30" viewBox="0 0 30 30">
            <rect y="1" width="30" height="28" rx="1.500" fill="#0a5ba8" />
            <rect x="2.500" y="3.500" width="11" height="23" rx="1.500" fill="#f4f8ff" />
            <rect x="16.500" y="3.500" width="11" height="13" rx="1" fill="#66d4ff" />
            <rect x="16.500" y="17.500" width="11" height="9" rx="1" fill="#128df0" />
          </svg>
        </TaskIcon>
        <TaskIcon>
          <svg width="30" height="30" viewBox="0 0 30 30">
            <path d="M15 1a14 14 0 1 1-8 25.500L1 28.500l2-6A14 14 0 0 1 15 1z" fill="#6665c8" />
            <path d="M15 1a14 14 0 0 1 14 14c-7-1-14-8-14-14z" fill="#8188d8" />
            <rect x="6.500" y="9.500" width="12" height="11" rx="2" fill="#fff" />
            <path d="M19.500 13.500l4-3v9l-4-3z" fill="#fff" />
          </svg>
        </TaskIcon>
        <TaskIcon dot="gray">
          <svg width="30" height="28" viewBox="0 0 30 28">
            <path d="M0 10L15 0l15 10v18H0z" fill="#0c5ca6" />
            <path d="M4 9h22v10H4z" fill="#f4f4f4" />
            <path d="M0 10l15 9L30 10v18H0z" fill="#2fb0ee" />
            <path d="M0 28l15-9 15 9z" fill="#1688d8" />
          </svg>
          <div className="absolute right-[4px] top-[4px] flex h-[20px] w-[20px] items-center justify-center rounded-full bg-[#4cc2ff] text-[15px] leading-none text-black translate-x-[8px]">1</div>
        </TaskIcon>
        <TaskIcon dot="pink" hi="red">
          <svg width="32" height="28" viewBox="0 0 32 28">
            <path d="M1 2a1.500 1.500 0 0 1 1.500-1.500h9L14 4H1z" fill="#d99a08" />
            <path d="M1 4h29a1.500 1.500 0 0 1 1.500 1.500V27H1z" fill="#ffd44f" />
            <path d="M6.500 27v-5a2.500 2.500 0 0 1 2.500-2.500h15a2.500 2.500 0 0 1 2.500 2.500v5z" fill="#1478cc" />
            <path d="M11.500 23.500h10" stroke="#073c68" strokeWidth="1.500" />
          </svg>
        </TaskIcon>
        <TaskIcon dot="gray">
          <svg width="30" height="30" viewBox="0 0 30 30">
            <defs>
              <linearGradient id="ff" x1=".8" y1="0" x2=".3" y2="1">
                <stop offset="0" stopColor="#fff04a" />
                <stop offset=".5" stopColor="#ff8a26" />
                <stop offset="1" stopColor="#f5316a" />
              </linearGradient>
            </defs>
            <path d="M18 0c2 4 5 4 7.500 8l1.500-2c3 9 2 14-1 18-6 8-19 7-23.500-1C0 18 0 12 3.500 6l1 3 3-5 2 4 5-1c0-3 1-5 3.500-7z" fill="url(#ff)" />
            <circle cx="15.500" cy="16" r="6.500" fill="#7a48d8" />
            <path d="M5 11c4-3 8-2 10 0-2 2-5 1-6 4z" fill="#ffb020" />
          </svg>
        </TaskIcon>
        <TaskIcon>
          <svg width="26" height="28" viewBox="0 0 26 28">
            <path d="M16 0l8 2.500v23L16 28z" fill="#f4640c" />
            <path d="M2 6.500L16 0v5.500L8 8v12.500l-6 3z" fill="#d83510" />
            <path d="M2 23.500l6-3 8 2.500v5z" fill="#a82010" />
          </svg>
        </TaskIcon>
        <TaskIcon dot="blue" hi="blue">
          <svg width="28" height="27" viewBox="0 0 28 27">
            <rect width="28" height="27" rx="4" fill="#b30b00" />
            <path d="M6 20.500c-1-2 4-4 8-5 4-.9 8 0 8 1.500 0 2-4 1-7-3-2-3-3-8-1.200-8.500 2-.2 1.200 4.500-.8 8.500-2.500 5-5.500 8-7 6.500z" fill="none" stroke="#fff" strokeWidth="1.600" />
          </svg>
        </TaskIcon>
        <TaskIcon dot="pink" hi="red">
          <svg width="28" height="28" viewBox="0 0 28 28">
            <rect width="28" height="28" rx="8" fill="#4a8cff" />
            <rect x="5" y="9" width="12" height="10.500" rx="2.500" fill="#fff" />
            <path d="M18 12.500l4.500-3.200v10L18 16z" fill="#fff" />
          </svg>
        </TaskIcon>
        <TaskIcon dot="gray">
          <svg width="28" height="23" viewBox="0 0 28 23">
            <rect x=".8" y=".8" width="26.400" height="21.400" fill="#0a0a0a" stroke="#b8bcc0" strokeWidth="1.600" />
            <path d="M1 2.500h26" stroke="#d0d0d0" strokeWidth="2" />
            <path d="M3 6.500h1.500M6 6l1.500 3M9 9h4" stroke="#eee" strokeWidth="1.200" />
          </svg>
        </TaskIcon>
        <TaskIcon dot="gray">
          <svg width="26" height="26" viewBox="0 0 26 26">
            <defs>
              <linearGradient id="ij" x1="0" y1="0.3" x2="1" y2=".7">
                <stop offset="0" stopColor="#ff4a78" />
                <stop offset=".35" stopColor="#8040e8" />
                <stop offset="1" stopColor="#1e88ff" />
              </linearGradient>
            </defs>
            <rect width="26" height="26" fill="url(#ij)" />
            <rect x="3.500" y="3" width="19" height="20" fill="#0a0210" />
            <text x="5.500" y="13.500" fontSize="11" fontWeight="700" fill="#fff" fontFamily="'DejaVu Sans Mono', monospace">IE</text>
            <path d="M6 19h7" stroke="#fff" strokeWidth="1.500" />
          </svg>
        </TaskIcon>
      </div>
      <div className="ml-auto flex items-center text-[15.500px] leading-none">
        <svg width="17" height="10" viewBox="0 0 17 10" fill="none" stroke="#eee" strokeWidth="1.300">
          <path d="M.8 9l7.700-8 7.700 8" />
        </svg>
        <svg width="18" height="20" viewBox="0 0 18 20" className="ml-[13px]">
          <path d="M9 .8c2.500 1.500 5 2 8.200 2v6.500C17.200 14.500 14 17.500 9 19.500 4 17.500.8 14.500.8 9.300V2.800c3.200 0 5.700-.5 8.200-2z" fill="#2384dc" stroke="#d5e8f8" strokeWidth="1.300" />
          <path d="M5 9.500l3 3 5-6" stroke="#fff" strokeWidth="2" fill="none" />
        </svg>
        <svg width="14" height="20" viewBox="0 0 14 20" className="ml-[19px]" fill="none" stroke="#7fd0e8" strokeWidth="1.400">
          <rect x="4" y=".8" width="6.500" height="13" rx="3.200" fill="#375a66" />
          <path d="M.8 9.500c0 9 12.800 9 12.800 0M7.200 16.500V20" />
        </svg>
        <div className="ml-[26px] flex w-[30px] flex-col items-center">
          <div className="flex h-[20px] items-center"><Fit w={29}>ENG</Fit></div>
          <div className="flex h-[20px] items-center"><Fit w={18}>US</Fit></div>
        </div>
        <svg width="21" height="16" viewBox="0 0 21 16" className="ml-[22px]" fill="none" stroke="#fff" strokeWidth="1.500">
          <path d="M1 6c5.500-6 13.500-6 19 0M4 9c4-4.300 9-4.300 13 0M7 11.800c2.200-2.300 4.800-2.300 7 0" />
          <circle cx="10.500" cy="13.700" r="1.900" fill="#fff" stroke="none" />
        </svg>
        <svg width="21" height="18" viewBox="0 0 21 18" className="ml-[9px]" fill="none" stroke="#fff" strokeWidth="1.300">
          <path d="M1 6h3.500L9 2v14l-4.500-4H1z" />
          <path d="M11.500 6.500c1.300 1.500 1.300 3.500 0 5M14 4.500c2.500 2.700 2.500 6.300 0 9M16.500 2.500c4 4 4 9 0 13" />
        </svg>
        <svg width="21" height="16" viewBox="0 0 21 16" className="ml-[10px]" fill="none" stroke="#fff" strokeWidth="1.300">
          <path d="M2.500 0v3M5.500 0v3" />
          <path d="M1 3h6v3L4 8z" fill="#fff" />
          <path d="M8 3.500h8a1.500 1.500 0 0 1 1.500 1.500v8a1.500 1.500 0 0 1-1.500 1.500H5.500A1.500 1.500 0 0 1 4 13V8M19.500 7.500v3" />
          <path d="M8 5.500h7.500v7H6V9z" fill="#fff" stroke="none" />
        </svg>
        <div className="ml-[20px] flex w-[68px] flex-col items-end">
          <div className="flex h-[20px] items-center"><Fit w={54}>5:23 pm</Fit></div>
          <div className="flex h-[20px] items-center"><Fit w={68}>12/11/2021</Fit></div>
        </div>
        <svg width="18" height="18" viewBox="0 0 18 18" className="ml-[11px] mr-[23px]" fill="none" stroke="#eee" strokeWidth="1.400">
          <path d="M8.500 1c7.500 1 10.500 8 6.500 12.500-4 4.500-11 4-14-.5C8 12.500 10.500 7 8.500 1z" />
        </svg>
      </div>
    </div>
  );
}

export default function App() {
  return (
    <div className="flex h-[1080px] w-[1920px] flex-col overflow-hidden bg-[#4d4d4d] font-['Open_Sans',sans-serif]">
      <TitleBar />
      <MenuBar />
      <TabBar />
      <Toolbar />
      <div className="flex h-[863px] shrink-0">
        <DocumentView />
        <div className="flex w-[21px] shrink-0 flex-col items-center bg-[#171717] pt-[200px]">
          <div className="h-[22px] w-[7px] bg-[#979797]" />
        </div>
        <div className="flex w-[23px] shrink-0 items-center border-r border-[#383838] bg-[#424242]">
          <svg width="8" height="14" viewBox="0 0 8 14" className="ml-[7px]">
            <path d="M0 .5l8 6.500-8 6.500z" fill={G} />
          </svg>
        </div>
        <ToolsPanel />
      </div>
      <Taskbar />
    </div>
  );
}
